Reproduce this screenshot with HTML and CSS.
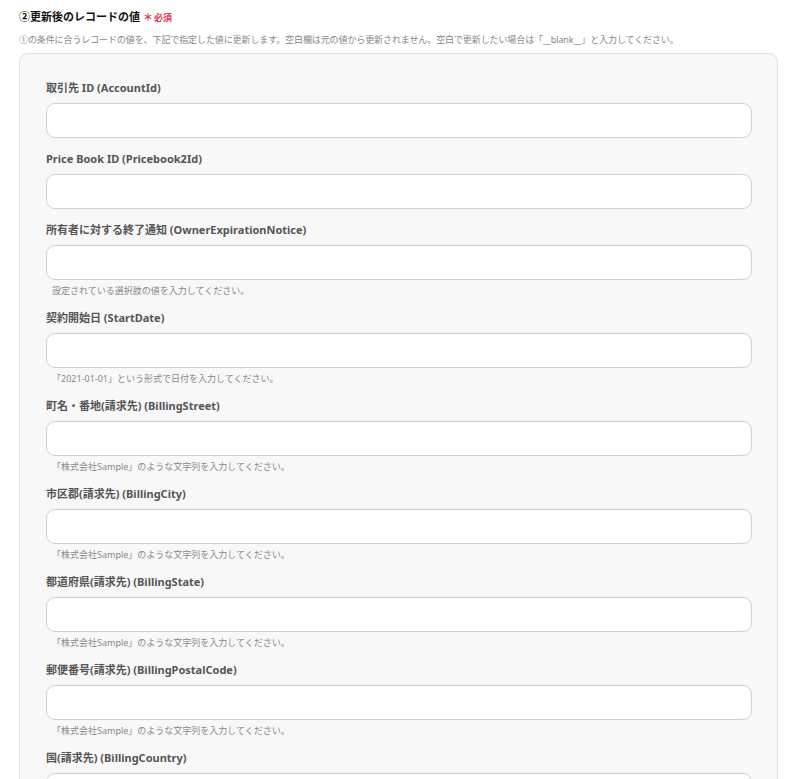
FILE: index.html
```html
<!DOCTYPE html>
<html lang="ja">
<head>
<meta charset="utf-8">
<link rel="stylesheet" href="styles.css">
</head>
<body>
<div class="section">
  <div class="title">②更新後のレコードの値<span class="req"><span class="ast">＊</span>必須</span></div>
  <div class="desc">①の条件に合うレコードの値を、下記で指定した値に更新します。空白欄は元の値から更新されません。空白で更新したい場合は「__blank__」と入力してください。</div>
  <div class="panel">
    <div class="field">
      <div class="label">取引先 ID (AccountId)</div>
      <div class="input"></div>
    </div>
    <div class="field">
      <div class="label">Price Book ID (Pricebook2Id)</div>
      <div class="input"></div>
    </div>
    <div class="field">
      <div class="label">所有者に対する終了通知 (OwnerExpirationNotice)</div>
      <div class="input"></div>
      <div class="hint">設定されている選択肢の値を入力してください。</div>
    </div>
    <div class="field">
      <div class="label">契約開始日 (StartDate)</div>
      <div class="input"></div>
      <div class="hint">「2021-01-01」という形式で日付を入力してください。</div>
    </div>
    <div class="field">
      <div class="label">町名・番地(請求先) (BillingStreet)</div>
      <div class="input"></div>
      <div class="hint">「株式会社Sample」のような文字列を入力してください。</div>
    </div>
    <div class="field">
      <div class="label">市区郡(請求先) (BillingCity)</div>
      <div class="input"></div>
      <div class="hint">「株式会社Sample」のような文字列を入力してください。</div>
    </div>
    <div class="field">
      <div class="label">都道府県(請求先) (BillingState)</div>
      <div class="input"></div>
      <div class="hint">「株式会社Sample」のような文字列を入力してください。</div>
    </div>
    <div class="field">
      <div class="label">郵便番号(請求先) (BillingPostalCode)</div>
      <div class="input"></div>
      <div class="hint">「株式会社Sample」のような文字列を入力してください。</div>
    </div>
    <div class="field">
      <div class="label">国(請求先) (BillingCountry)</div>
      <div class="input"></div>
    </div>
  </div>
</div>
</body>
</html>
```

FILE: styles.css
```css
html, body {
  margin: 0;
  padding: 0;
  background: #ffffff;
  overflow: hidden;
}
body {
  font-family: "Noto Sans", "Noto Sans CJK JP", sans-serif;
  color: #222;
}
.section {
  padding: 9px 0 0 19px;
  width: 759px;
}
.title {
  font-size: 11px;
  font-weight: bold;
  line-height: 16px;
  color: #111;
}
.req {
  color: #e8344e;
  font-size: 9px;
  margin-left: 3px;
}
.ast {
  font-size: 10px;
  margin-right: 1px;
}
.desc {
  font-size: 9px;
  line-height: 14px;
  color: #888;
  margin-top: 7px;
  letter-spacing: -0.1px;
}
.panel {
  margin-top: 6px;
  background: #f8f8f8;
  border: 1px solid #e0e0e3;
  border-radius: 9px;
  padding: 26px 25px 0 26px;
  height: 800px;
}
.field {
  margin-bottom: 13px;
}
.label {
  font-size: 11px;
  font-weight: bold;
  line-height: 16px;
  color: #555;
}
.input {
  margin-top: 7px;
  height: 33px;
  background: #fff;
  border: 1px solid #cfd2d8;
  border-radius: 9px;
}
.hint {
  font-size: 9px;
  line-height: 13px;
  color: #888;
  margin-top: 4px;
  padding-left: 6px;
}
```
